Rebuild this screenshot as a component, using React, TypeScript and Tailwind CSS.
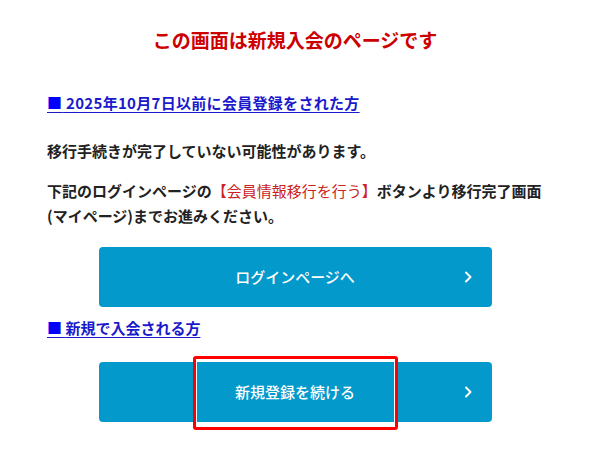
const FONT = { fontFamily: '"Noto Sans CJK JP", "Noto Sans", sans-serif' }

function Chevron() {
  return (
    <svg width="8" height="12" viewBox="0 0 8 12" className="absolute right-[20px] top-1/2 -translate-y-1/2">
      <polyline points="2,1.5 6.5,6 2,10.5" fill="none" stroke="white" strokeWidth="2" strokeLinecap="round" strokeLinejoin="round" />
    </svg>
  )
}

function BlueButton({ label, highlight }: { label: string; highlight?: boolean }) {
  return (
    <a
      href="#"
      className="relative mx-auto flex h-[60px] w-[393px] items-center justify-center rounded-[4px] bg-[#0399cb] text-[15px] font-medium text-white"
    >
      {label}
      <Chevron />
      {highlight && (
        <span className="pointer-events-none absolute left-[94px] top-[-6px] h-[74px] w-[205px] rounded-[3px] border-[3px] border-[#ff0000] shadow-[inset_0_0_0_1px_#ffffff]" />
      )}
    </a>
  )
}

function SectionLink({ children, className }: { children: string; className?: string }) {
  return (
    <a href="#" className={`block w-fit text-[15px] font-bold leading-[24px] text-[#1a1acc] underline underline-offset-[3px] ${className ?? ''}`}>
      <span className="text-[#0000ff]">■</span> {children}
    </a>
  )
}

export default function App() {
  return (
    <main className="w-full bg-white text-[#222]" style={FONT}>
      <div className="px-[47px] pb-[24px]">
        <h1 className="mt-[26px] text-center text-[19px] font-bold leading-[28px] text-[#cc0000]">
          この画面は新規入会のページです
        </h1>

        <SectionLink className="mt-[37px] tracking-[0.02em]">2025年10月7日以前に会員登録をされた方</SectionLink>

        <p className="mt-[24px] text-[15px] font-bold leading-[24px]">移行手続きが完了していない可能性があります。</p>

        <p className="mt-[15px] whitespace-nowrap text-[15px] font-bold leading-[25px]">
          下記のログインページの<span className="font-normal text-[#cc2222]">【会員情報移行を行う】</span>ボタンより移行完了画面
          <br />
          (マイページ)までお進みください。
        </p>

        <div className="mt-[19px]">
          <BlueButton label="ログインページへ" />
        </div>

        <SectionLink className="mt-[9px]">新規で入会される方</SectionLink>

        <div className="mt-[22px]">
          <BlueButton label="新規登録を続ける" highlight />
        </div>
      </div>
    </main>
  )
}
